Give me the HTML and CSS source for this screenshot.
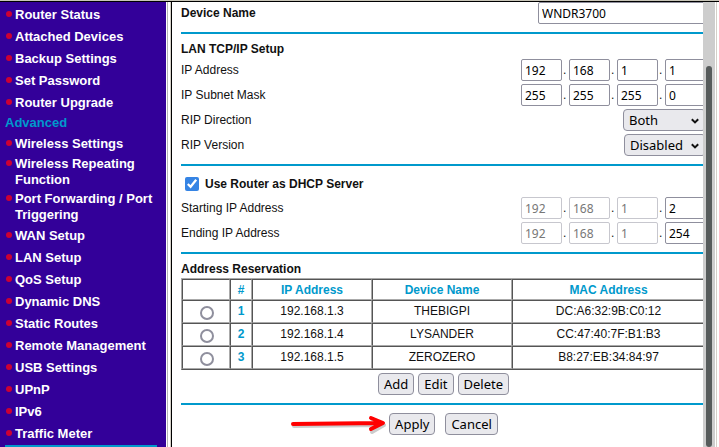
FILE: index.html
```html
<!DOCTYPE html>
<html lang="en">
<head>
<meta charset="utf-8">
<title>LAN Setup</title>
<link rel="stylesheet" href="styles.css">
</head>
<body>
<div class="page">
  <nav class="sidebar">
    <ul class="menu">
      <li><a href="#">Router Status</a></li>
      <li><a href="#">Attached Devices</a></li>
      <li><a href="#">Backup Settings</a></li>
      <li><a href="#">Set Password</a></li>
      <li><a href="#">Router Upgrade</a></li>
    </ul>
    <h2 class="menu-title">Advanced</h2>
    <ul class="menu">
      <li><a href="#">Wireless Settings</a></li>
      <li class="tall"><a href="#">Wireless Repeating Function</a></li>
      <li class="tall"><a href="#">Port Forwarding / Port Triggering</a></li>
      <li><a href="#">WAN Setup</a></li>
      <li><a href="#">LAN Setup</a></li>
      <li><a href="#">QoS Setup</a></li>
      <li><a href="#">Dynamic DNS</a></li>
      <li><a href="#">Static Routes</a></li>
      <li><a href="#">Remote Management</a></li>
      <li><a href="#">USB Settings</a></li>
      <li><a href="#">UPnP</a></li>
      <li><a href="#">IPv6</a></li>
      <li><a href="#">Traffic Meter</a></li>
    </ul>
    <hr class="menu-rule">
  </nav>
  <div class="divider"></div>
  <main class="main">
    <form class="content">
      <div class="device-row">
        <label class="strong" for="device">Device Name</label>
        <input class="field wide" id="device" type="text" value="WNDR3700">
      </div>
      <hr class="rule">
      <section>
        <h3 class="heading">LAN TCP/IP Setup</h3>
        <div class="row">
          <label for="ip1">IP Address</label>
          <div class="octets">
            <input class="field" id="ip1" type="text" value="192"><span>.</span>
            <input class="field" aria-label="IP Address octet 2" type="text" value="168"><span>.</span>
            <input class="field" aria-label="IP Address octet 3" type="text" value="1"><span>.</span>
            <input class="field" aria-label="IP Address octet 4" type="text" value="1">
          </div>
        </div>
        <div class="row">
          <label for="mask1">IP Subnet Mask</label>
          <div class="octets">
            <input class="field" id="mask1" type="text" value="255"><span>.</span>
            <input class="field" aria-label="Subnet Mask octet 2" type="text" value="255"><span>.</span>
            <input class="field" aria-label="Subnet Mask octet 3" type="text" value="255"><span>.</span>
            <input class="field" aria-label="Subnet Mask octet 4" type="text" value="0">
          </div>
        </div>
        <div class="row">
          <label for="direction">RIP Direction</label>
          <div class="picker">
            <select id="direction"><option>Both</option></select>
            <svg class="chevron" viewBox="0 0 8 6" aria-hidden="true"><path d="M0.8 1.2 4 4.4 7.2 1.2"/></svg>
          </div>
        </div>
        <div class="row">
          <label for="version">RIP Version</label>
          <div class="picker">
            <select id="version"><option>Disabled</option></select>
            <svg class="chevron" viewBox="0 0 8 6" aria-hidden="true"><path d="M0.8 1.2 4 4.4 7.2 1.2"/></svg>
          </div>
        </div>
      </section>
      <hr class="rule">
      <section>
        <div class="check-row">
          <input class="check" id="dhcp" type="checkbox" checked>
          <label class="strong" for="dhcp">Use Router as DHCP Server</label>
        </div>
        <div class="row">
          <label for="start4">Starting IP Address</label>
          <div class="octets">
            <input class="field" aria-label="Starting octet 1" type="text" value="192" disabled><span>.</span>
            <input class="field" aria-label="Starting octet 2" type="text" value="168" disabled><span>.</span>
            <input class="field" aria-label="Starting octet 3" type="text" value="1" disabled><span>.</span>
            <input class="field" id="start4" type="text" value="2">
          </div>
        </div>
        <div class="row">
          <label for="end4">Ending IP Address</label>
          <div class="octets">
            <input class="field" aria-label="Ending octet 1" type="text" value="192" disabled><span>.</span>
            <input class="field" aria-label="Ending octet 2" type="text" value="168" disabled><span>.</span>
            <input class="field" aria-label="Ending octet 3" type="text" value="1" disabled><span>.</span>
            <input class="field" id="end4" type="text" value="254">
          </div>
        </div>
      </section>
      <hr class="rule">
      <section>
        <h3 class="heading">Address Reservation</h3>
        <table class="grid">
          <colgroup><col class="c-pick"><col class="c-num"><col class="c-ip"><col class="c-name"><col></colgroup>
          <thead>
            <tr><th></th><th>#</th><th>IP Address</th><th>Device Name</th><th>MAC Address</th></tr>
          </thead>
          <tbody>
            <tr><td><input class="radio" type="radio" name="pick" aria-label="Select THEBIGPI"></td><th>1</th><td>192.168.1.3</td><td>THEBIGPI</td><td>DC:A6:32:9B:C0:12</td></tr>
            <tr><td><input class="radio" type="radio" name="pick" aria-label="Select LYSANDER"></td><th>2</th><td>192.168.1.4</td><td>LYSANDER</td><td>CC:47:40:7F:B1:B3</td></tr>
            <tr><td><input class="radio" type="radio" name="pick" aria-label="Select ZEROZERO"></td><th>3</th><td>192.168.1.5</td><td>ZEROZERO</td><td>B8:27:EB:34:84:97</td></tr>
          </tbody>
        </table>
        <div class="buttons">
          <button type="button">Add</button>
          <button type="button">Edit</button>
          <button type="button">Delete</button>
        </div>
      </section>
      <hr class="rule">
      <div class="buttons final">
        <span class="apply">
          <button type="button">Apply</button>
          <svg class="arrow" viewBox="0 0 100 22" aria-hidden="true">
            <path class="arrow-shadow" d="M5 13 94 12M83 6 95 12 83 19"/>
            <path class="arrow-line" d="M4 11 92 10M82 5 94 10 82 16"/>
          </svg>
        </span>
        <button type="button">Cancel</button>
      </div>
    </form>
  </main>
  <div class="scrollbar"><div class="thumb"></div></div>
  <div class="edge"></div>
</div>
</body>
</html>
```
FILE: styles.css
```css
* { box-sizing: border-box; }

body {
  margin: 0;
  background: #fff;
  color: #111;
  font-family: "Liberation Sans", Arial, sans-serif;
  font-size: 12px;
  line-height: 16px;
}

.page {
  display: flex;
  height: 100vh;
  overflow: hidden;
  border-top: 1px solid #c8c5b8;
}

.sidebar {
  flex: 0 0 166px;
  border-top: 1px solid #000;
  padding: 2px 9px 0 5px;
  background: #309;
  overflow: hidden;
}

.menu { margin: 0; padding: 0; list-style: none; }

.menu li {
  display: flex;
  gap: 3px;
  padding: 3px 0;
  font-size: 13px;
  font-weight: bold;
}

.menu .tall { padding: 1px 0 2px; }

.menu li::before {
  content: "";
  flex: none;
  width: 6px;
  height: 6px;
  margin: 4px 0 0 1px;
  border-radius: 50%;
  background: #c03;
}

.menu a { color: #fff; text-decoration: none; }

.menu-title {
  margin: 0;
  padding: 1px 0 2px;
  color: #09c;
  font-size: 13px;
  line-height: 16px;
}

.menu-rule { height: 2px; margin: 0; border: 0; background: #09c; }

.divider {
  flex: 0 0 6px;
  border-top: 1px solid #000;
  border-right: 1px solid #000;
  background: linear-gradient(90deg, #fff 1px, #b5b5b5 1px 2px, #fff 2px 4px, #d4d0c8 4px);
}

.main {
  flex: 1;
  min-width: 0;
  border-top: 1px solid #000;
  overflow: hidden;
}

.content { margin: 0 -3px 0 9px; }

.row, .device-row {
  display: flex;
  align-items: center;
  justify-content: space-between;
}

.row { padding: 2px 0 1px; }
.device-row { padding-bottom: 1px; }
.strong, .heading { font-size: 12px; font-weight: bold; }
.heading { margin: 0; line-height: 16px; }
.rule { height: 2px; margin: 7px 0; border: 0; background: #09c; }

.field, select, button {
  height: 22px;
  margin: 0;
  border: 1px solid #8f8f9d;
  font-family: "Noto Sans", sans-serif;
  font-size: 13px;
  line-height: 18px;
  color: #000;
}

.field {
  width: 41px;
  padding: 0 3px;
  border-radius: 2px;
  background: #fff;
  font-size: 12px;
}

.field:disabled { border-color: #c7c7ce; color: #777; }
.wide { width: 168px; }
.octets { display: flex; align-items: center; }
.octets span { width: 7px; padding-left: 1px; }

.picker { position: relative; }

select {
  appearance: none;
  display: block;
  padding: 0 18px 0 5px;
  border-radius: 4px;
  background: #e9e9ed;
}

#direction { width: 83px; }
#version { width: 82px; }

.chevron {
  position: absolute;
  top: 9px;
  right: 7px;
  width: 8px;
  height: 6px;
  fill: none;
  stroke: #111;
  stroke-width: 2;
  pointer-events: none;
}

.check-row { display: flex; align-items: center; gap: 6px; height: 22px; padding-left: 4px; }
.check { width: 14px; height: 14px; margin: 0; accent-color: #3584e4; }

.grid {
  width: 100%;
  margin-top: 1px;
  border: 1px solid;
  border-color: #aaa #555 #555 #aaa;
  border-collapse: separate;
  border-spacing: 0;
  table-layout: fixed;
}

.grid th, .grid td {
  height: 23px;
  padding: 0 0 2px;
  border: 1px solid;
  border-color: #555 #aaa #aaa #555;
  text-align: center;
  line-height: 16px;
}

.grid thead th { height: 21px; padding: 0; }
.grid td:first-child { padding: 0 0 0 2px; }
.grid th { color: #09c; }
.c-pick { width: 48px; }
.c-num { width: 22px; }
.c-ip { width: 120px; }
.c-name { width: 140px; }

.radio {
  appearance: none;
  display: block;
  width: 14px;
  height: 14px;
  margin: 2px auto 0;
  border: 2px solid #8f8f9d;
  border-radius: 50%;
}

.buttons { display: flex; justify-content: center; gap: 4px; padding: 3px 0 1px; }
.final { gap: 10px; padding: 1px 0 0; }

button { padding: 0 5px; border-radius: 4px; background: #e9e9ed; }

.apply { position: relative; }

.arrow {
  position: absolute;
  top: 0;
  right: 100%;
  width: 100px;
  height: 22px;
  fill: none;
  stroke-width: 4;
  stroke-linecap: round;
  stroke-linejoin: round;
}

.arrow-line { stroke: #f00; }
.arrow-shadow { stroke: #0003; }

.scrollbar {
  flex: 0 0 12px;
  border-top: 1px solid #000;
  padding: 64px 3px 0;
  background: #cdcdcd;
}

.thumb { height: 100%; border-radius: 3px; background: #565b5b; }

.edge {
  flex: 0 0 4px;
  border-top: 1px solid #000;
  background: linear-gradient(90deg, #fff 1px, #d4d0c8 1px 2px, #fff 2px);
}
```
